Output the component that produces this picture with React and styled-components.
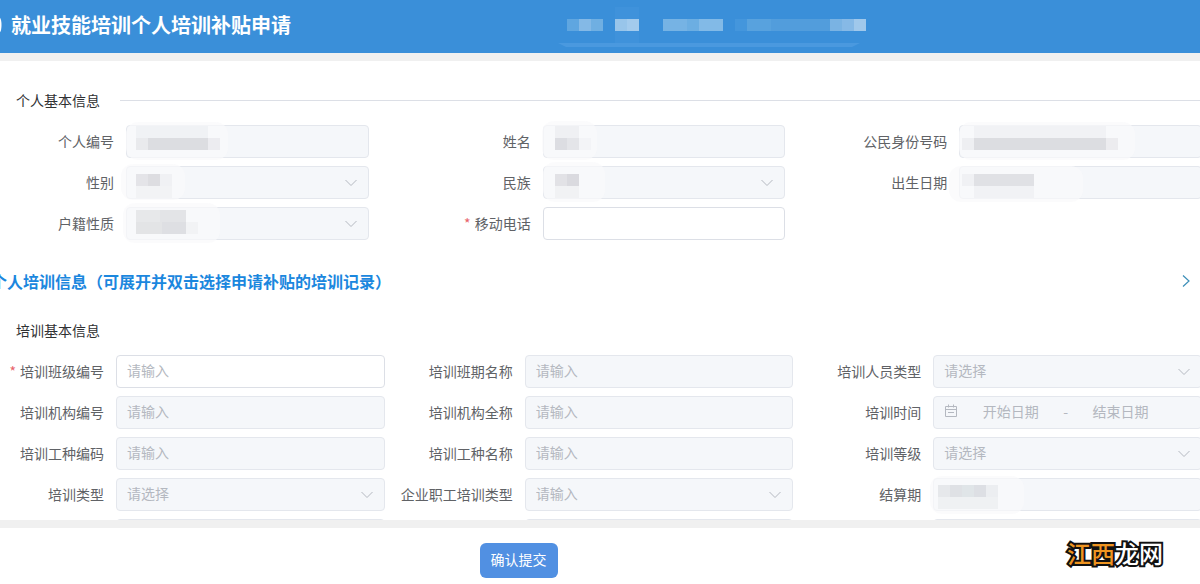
import React from "react";
import styled, { createGlobalStyle } from "styled-components";

const GlobalStyle = createGlobalStyle`
  *, *::before, *::after {
    box-sizing: border-box;
  }
  body {
    margin: 0;
    background: #f0f0f0;
    overflow: hidden;
  }
  body, input, select, button {
    font-family: "Noto Sans CJK SC", "Noto Sans", sans-serif;
    font-size: 14px;
  }
`;

const Page = styled.div`
  display: flex;
  flex-direction: column;
  gap: 8px;
  height: 100vh;
  overflow: hidden;
`;

const Header = styled.header`
  display: flex;
  align-items: center;
  flex: none;
  height: 53px;
  padding-bottom: 4px;
  background: #3a8fd9;
`;

const HeaderIcon = styled.svg`
  flex: none;
  width: 4px;
  height: 16px;
`;

const HeaderTitle = styled.h1`
  flex: 0 0 46%;
  margin: 0 2px 0 0;
  padding-left: 7px;
  font-size: 20px;
  line-height: 24px;
  font-weight: 700;
  color: #fff;
`;

const HeaderMosaic = styled.svg`
  flex: none;
  width: 310px;
  height: 49px;
`;

const Main = styled.main`
  flex: 1;
  min-height: 0;
  padding-top: 29px;
  background: #fff;
  overflow: hidden;
`;

const SectionTitle = styled.h2`
  display: flex;
  align-items: center;
  gap: 20px;
  margin: 0 0 15px;
  padding-left: 16px;
  font-size: 14px;
  line-height: 20px;
  font-weight: 400;
  color: #303133;
  &::after {
    content: "";
    flex: 1;
    height: 1px;
    background: ${props => (props.$line ? "#dcdfe6" : "transparent")};
  }
`;

const PanelHeading = styled.h2`
  display: flex;
  align-items: center;
  justify-content: space-between;
  margin: 29px 0 27px;
  padding-right: 8px;
  font-size: 16px;
  line-height: 24px;
  font-weight: 700;
  color: #1b87de;
  span {
    margin-left: -9px;
  }
  svg {
    width: 12px;
    height: 14px;
  }
`;

const FormGrid = styled.div`
  display: grid;
  grid-template-columns: repeat(3, minmax(0, 1fr));
  column-gap: ${props => props.$gap}px;
  row-gap: 8px;
  margin-right: -2px;
`;

const FormItem = styled.div`
  display: flex;
  height: 33px;
`;

const Label = styled.label`
  display: flex;
  justify-content: flex-end;
  flex: 0 0 ${props => props.$width}px;
  min-width: 0;
  padding-right: 12px;
  line-height: 33px;
  white-space: nowrap;
  color: #606266;
`;

const Required = styled.span`
  margin-right: 4px;
  color: #e8626a;
`;

const Control = styled.div`
  position: relative;
  flex: 1;
  min-width: 0;
`;

const Input = styled.input`
  display: block;
  width: 100%;
  height: 100%;
  margin: 0;
  padding: 0 10px 3px;
  border: 1px solid ${props => (props.disabled ? "#e4e7ed" : "#dcdfe6")};
  border-radius: 4px;
  background: ${props => (props.disabled ? "#f5f7fa" : "#fff")};
  color: #606266;
  outline: none;
  &::placeholder {
    color: #b4b8c0;
    opacity: 1;
  }
`;

const Select = styled.select`
  display: block;
  width: 100%;
  height: 100%;
  margin: 0;
  padding: 0 30px 3px 10px;
  border: 1px solid #e4e7ed;
  border-radius: 4px;
  background: #f5f7fa;
  color: #b4b8c0;
  opacity: 1;
  appearance: none;
`;

const Arrow = styled.svg`
  position: absolute;
  top: 13px;
  right: 12px;
  width: 12px;
  height: 8px;
  pointer-events: none;
`;

const Mosaic = styled.svg`
  position: absolute;
  top: 0;
  left: 0;
  width: 100%;
  height: 100%;
  overflow: visible;
  pointer-events: none;
`;

const DateRange = styled.div`
  display: flex;
  align-items: center;
  height: 100%;
  padding: 0 28px 3px 10px;
  border: 1px solid #e4e7ed;
  border-radius: 4px;
  background: #f5f7fa;
  color: #b4b8c0;
  svg {
    flex: none;
    width: 14px;
    height: 14px;
  }
`;

const DateInput = styled.input`
  flex: 1;
  min-width: 0;
  padding: 0;
  border: 0;
  background: transparent;
  text-align: center;
  &::placeholder {
    color: #b4b8c0;
    opacity: 1;
  }
`;

const Footer = styled.footer`
  display: grid;
  grid-template-columns: 1fr auto;
  align-items: center;
  gap: 30px;
  flex: none;
  height: 56px;
  padding-right: 37px;
  background: #fff;
`;

const SubmitButton = styled.button`
  justify-self: center;
  height: 35px;
  margin-top: 8px;
  padding: 0 11px 2px;
  border: 0;
  border-radius: 6px;
  background: #5190e2;
  color: #fff;
  cursor: pointer;
`;

const SiteMark = styled.div`
  margin-bottom: 6px;
  font-size: 24px;
  line-height: 32px;
  font-weight: 500;
  color: #fff;
  -webkit-text-stroke: 4px #111;
  paint-order: stroke fill;
  em {
    font-style: normal;
    color: #ee9420;
  }
`;

// blocks are [x, y, width, fill], every block is 12px high
const headerBlocks = [
  [9, 19, 12, "#5fa6e0"],
  [21, 19, 12, "#84b9e6"],
  [33, 19, 12, "#6fafe2"],
  [57, 7, 24, "#3f92db"],
  [57, 19, 12, "#98c5ea"],
  [69, 19, 12, "#a3cbed"],
  [57, 31, 24, "#3f92db"],
  [105, 19, 24, "#76b3e4"],
  [129, 19, 12, "#6caee2"],
  [141, 19, 24, "#82bae7"],
  [177, 19, 12, "#4496dc"],
  [189, 19, 24, "#58a2de"],
  [213, 19, 59, "#529ddc"],
  [272, 19, 12, "#7ab3e3"],
  [284, 19, 12, "#86b9e6"],
  [296, 19, 12, "#a0c8eb"]
];

const personFields = [
  {
    id: "personNo",
    label: "个人编号",
    smear: [0, -3, 102, 38],
    blocks: [
      [10, 1, 72, "#f0f2f5"],
      [10, 13, 12, "#e9eaed"],
      [22, 13, 60, "#dcdde1"],
      [82, 13, 12, "#ececf0"]
    ]
  },
  {
    id: "name",
    label: "姓名",
    smear: [-1, -4, 55, 39],
    blocks: [
      [12, 1, 24, "#eff0f3"],
      [12, 13, 12, "#dcdde2"],
      [24, 13, 12, "#e4e5e9"],
      [36, 13, 12, "#f3f4f7"]
    ]
  },
  {
    id: "idCard",
    label: "公民身份号码",
    smear: [0, -3, 176, 38],
    blocks: [
      [15, 1, 132, "#f1f2f5"],
      [3, 13, 12, "#eeeff2"],
      [15, 13, 132, "#dcdde1"],
      [147, 13, 12, "#ececef"]
    ]
  },
  {
    id: "gender",
    label: "性别",
    type: "select",
    smear: [-5, -2, 64, 36],
    blocks: [
      [10, 8, 12, "#e4e4e8"],
      [22, 8, 12, "#dddde1"],
      [34, 8, 12, "#f0f1f4"],
      [10, 20, 36, "#f2f3f5"]
    ]
  },
  {
    id: "nation",
    label: "民族",
    type: "select",
    smear: [0, -4, 62, 40],
    blocks: [
      [12, 8, 12, "#e2e2e6"],
      [24, 8, 12, "#dadadf"],
      [12, 20, 24, "#f1f2f4"]
    ]
  },
  {
    id: "birthday",
    label: "出生日期",
    smear: [-10, 0, 134, 36],
    blocks: [
      [3, 8, 12, "#f0f1f4"],
      [15, 8, 60, "#e0e1e5"],
      [15, 20, 60, "#f1f2f5"]
    ]
  },
  {
    id: "household",
    label: "户籍性质",
    type: "select",
    smear: [-3, -4, 97, 40],
    blocks: [
      [10, 3, 24, "#e7e8ea"],
      [34, 3, 26, "#e3e4e7"],
      [10, 15, 26, "#e3e4e6"],
      [36, 15, 24, "#dedfe3"],
      [60, 15, 12, "#f2f3f5"]
    ]
  },
  { id: "mobile", label: "移动电话", required: true, enabled: true }
];

const trainingFields = [
  {
    id: "classNo",
    label: "培训班级编号",
    placeholder: "请输入",
    required: true,
    enabled: true
  },
  { id: "className", label: "培训班期名称", placeholder: "请输入" },
  {
    id: "traineeType",
    label: "培训人员类型",
    type: "select",
    placeholder: "请选择"
  },
  { id: "orgNo", label: "培训机构编号", placeholder: "请输入" },
  { id: "orgName", label: "培训机构全称", placeholder: "请输入" },
  { id: "trainDate", label: "培训时间", type: "range" },
  { id: "jobNo", label: "培训工种编码", placeholder: "请输入" },
  { id: "jobName", label: "培训工种名称", placeholder: "请输入" },
  { id: "level", label: "培训等级", type: "select", placeholder: "请选择" },
  { id: "trainType", label: "培训类型", type: "select", placeholder: "请选择" },
  {
    id: "staffType",
    label: "企业职工培训类型",
    type: "select",
    placeholder: "请输入"
  },
  {
    id: "settlePeriod",
    label: "结算期",
    smear: [-3, -2, 94, 38],
    blocks: [
      [5, 7, 12, "#e6e8eb"],
      [17, 7, 12, "#dfe1e5"],
      [29, 7, 12, "#e0e5e8"],
      [41, 7, 12, "#dddfe4"],
      [53, 7, 12, "#eceef1"],
      [5, 19, 60, "#eff1f3"]
    ]
  },
  { id: "extra1" },
  { id: "extra2" },
  { id: "extra3" }
];

const Blocks = ({ blocks }) =>
  blocks.map(([x, y, width, fill]) => (
    <rect key={`${x}-${y}`} x={x} y={y} width={width} height="12" fill={fill} />
  ));

const Field = ({ field }) => {
  const { id, type, placeholder, enabled, smear, blocks } = field;
  if (type === "range") {
    return (
      <DateRange>
        <svg viewBox="0 0 14 14" fill="none" stroke="#b4b8c0">
          <path d="M1.5 2.5h11v10h-11zM1.5 5.5h11M4.5 .5v3M9.5 .5v3M4 8.5h6" />
        </svg>
        <DateInput id={id} placeholder="开始日期" disabled />
        <span>-</span>
        <DateInput aria-label="结束日期" placeholder="结束日期" disabled />
      </DateRange>
    );
  }
  return (
    <>
      {type === "select" ? (
        <>
          <Select id={id} disabled>
            <option>{placeholder}</option>
          </Select>
          <Arrow viewBox="0 0 12 8" fill="none" stroke="#b4b8c0">
            <path d="M.5 1 6 6.5 11.5 1" />
          </Arrow>
        </>
      ) : (
        <Input id={id} placeholder={placeholder} disabled={!enabled} />
      )}
      {blocks && (
        <Mosaic aria-hidden="true">
          <rect
            x={smear[0]}
            y={smear[1]}
            width={smear[2]}
            height={smear[3]}
            rx="12"
            fill="#f9fafb"
            fillOpacity="0.7"
          />
          <Blocks blocks={blocks} />
        </Mosaic>
      )}
    </>
  );
};

const FieldGrid = ({ fields, labelWidth, gap }) => (
  <FormGrid $gap={gap}>
    {fields.map(field => (
      <FormItem key={field.id}>
        <Label htmlFor={field.id} $width={labelWidth}>
          {field.required && <Required>*</Required>}
          {field.label}
        </Label>
        <Control>
          <Field field={field} />
        </Control>
      </FormItem>
    ))}
  </FormGrid>
);

const App = () => (
  <>
    <GlobalStyle />
    <Page>
      <Header>
        <HeaderIcon viewBox="0 0 4 16" fill="none" stroke="#fff" strokeWidth="2">
          <path d="M-1 1C1 3 1 13 -1 15" />
        </HeaderIcon>
        <HeaderTitle>就业技能培训个人培训补贴申请</HeaderTitle>
        <HeaderMosaic aria-hidden="true">
          <Blocks blocks={headerBlocks} />
          <path d="M0 43h302l-8 4H8z" fill="#4a99df" />
        </HeaderMosaic>
      </Header>
      <Main>
        <SectionTitle $line>个人基本信息</SectionTitle>
        <FieldGrid fields={personFields} labelWidth={126} gap={48} />
        <PanelHeading>
          <span>个人培训信息（可展开并双击选择申请补贴的培训记录）</span>
          <svg viewBox="0 0 12 14" fill="none" stroke="#3d8fb8" strokeWidth="1.2">
            <path d="M3 1.5 9 7l-6 5.5" />
          </svg>
        </PanelHeading>
        <SectionTitle>培训基本信息</SectionTitle>
        <FieldGrid fields={trainingFields} labelWidth={116} gap={24} />
      </Main>
      <Footer>
        <SubmitButton type="button">确认提交</SubmitButton>
        <SiteMark>
          <em>江西</em>龙网
        </SiteMark>
      </Footer>
    </Page>
  </>
);

export default App;
